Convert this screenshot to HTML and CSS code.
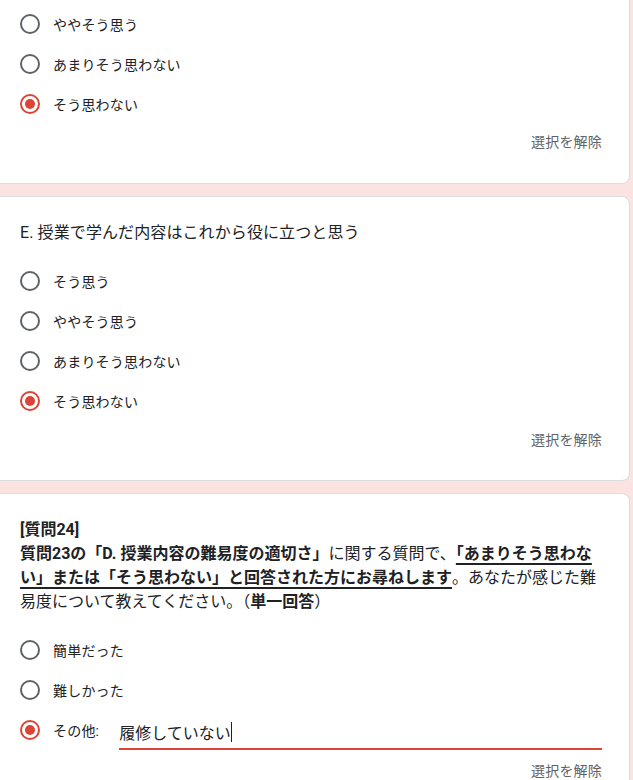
FILE: index.html
```html
<!DOCTYPE html>
<html lang="ja">
<head>
<meta charset="utf-8">
<link rel="stylesheet" href="styles.css">
</head>
<body>
<div class="page">
  <section class="card card-first">
    <div class="options">
      <label class="opt"><span class="radio"></span><span class="opt-text">そう思う</span></label>
      <label class="opt"><span class="radio"></span><span class="opt-text">ややそう思う</span></label>
      <label class="opt"><span class="radio"></span><span class="opt-text">あまりそう思わない</span></label>
      <label class="opt"><span class="radio checked"></span><span class="opt-text">そう思わない</span></label>
    </div>
    <div class="clear-row"><span class="clear">選択を解除</span></div>
  </section>

  <section class="card">
    <div class="title">E. 授業で学んだ内容はこれから役に立つと思う</div>
    <div class="options">
      <label class="opt"><span class="radio"></span><span class="opt-text">そう思う</span></label>
      <label class="opt"><span class="radio"></span><span class="opt-text">ややそう思う</span></label>
      <label class="opt"><span class="radio"></span><span class="opt-text">あまりそう思わない</span></label>
      <label class="opt"><span class="radio checked"></span><span class="opt-text">そう思わない</span></label>
    </div>
    <div class="clear-row"><span class="clear">選択を解除</span></div>
  </section>

  <section class="card">
    <div class="title q-title">
      <b>[質問24]</b><br>
      <b>質問23の「D. 授業内容の難易度の適切さ」</b>に関する質問で、<b class="ul">「あまりそう思わない」または「そう思わない」と回答された方にお尋ねします</b>。あなたが感じた難易度について教えてください。（<b>単一回答</b>）
    </div>
    <div class="options">
      <label class="opt"><span class="radio"></span><span class="opt-text">簡単だった</span></label>
      <label class="opt"><span class="radio"></span><span class="opt-text">難しかった</span></label>
      <label class="opt opt-other"><span class="radio checked"></span><span class="opt-text">その他:</span><span class="other-input"><span class="other-value">履修していない</span><span class="caret"></span></span></label>
    </div>
    <div class="clear-row"><span class="clear">選択を解除</span></div>
  </section>
</div>
</body>
</html>
```

FILE: styles.css
```css
html, body {
  margin: 0;
  padding: 0;
}
body {
  background: #fae3e1;
  font-family: Roboto, "Noto Sans CJK JP", sans-serif;
  color: #202124;
  overflow: hidden;
  height: 780px;
}
.page {
  width: 640px;
  margin-left: -10px;
  margin-top: -37px;
  display: flex;
  flex-direction: column;
  gap: 12px;
}
.card {
  background: #fff;
  border: 1px solid #dadce0;
  border-radius: 8px;
  padding: 24px 24px 23px 29px;
  display: flex;
  flex-direction: column;
}
.card-first {
  padding-top: 0;
  padding-bottom: 25px;
}
.card-first .clear-row {
  height: 34px;
}
.title {
  font-size: 16px;
  line-height: 24px;
  letter-spacing: 0.1px;
  margin-bottom: 16px;
}
.q-title {
  letter-spacing: 0;
}
.q-title b {
  font-weight: 700;
}
.ul {
  text-decoration: underline;
  text-decoration-thickness: 2px;
  text-underline-offset: 4px;
}
.options {
  display: flex;
  flex-direction: column;
}
.opt {
  display: flex;
  align-items: center;
  height: 40px;
}
.opt-other {
  height: 40px;
  margin-bottom: 2px;
}
.radio {
  width: 20px;
  height: 20px;
  box-sizing: border-box;
  border: 2px solid #5f6368;
  border-radius: 50%;
  flex: none;
  display: flex;
  align-items: center;
  justify-content: center;
}
.radio.checked {
  border-color: #db4437;
}
.radio.checked::after {
  content: "";
  width: 10px;
  height: 10px;
  border-radius: 50%;
  background: #db4437;
}
.opt-text {
  font-size: 14px;
  margin-left: 13px;
  letter-spacing: 0.2px;
}
.other-input {
  flex: 1;
  margin-left: 20px;
  margin-right: 3px;
  display: flex;
  align-items: center;
  height: 32px;
  border-bottom: 2px solid #db4437;
  margin-top: 6px;
  font-size: 16px;
}
.caret {
  width: 1px;
  height: 20px;
  background: #202124;
}
.clear-row {
  display: flex;
  justify-content: flex-end;
  align-items: center;
  height: 36px;
}
.clear {
  font-size: 14px;
  color: #5f6368;
  letter-spacing: 0.2px;
  padding-right: 3px;
}
```
